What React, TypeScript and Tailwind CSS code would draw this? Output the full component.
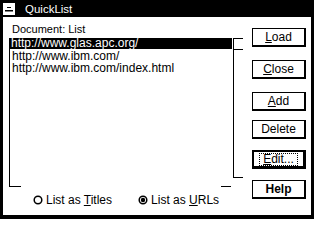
import React from 'react';

const urls = [
    "http://www.glas.apc.org/",
    "http://www.ibm.com/",
    "http://www.ibm.com/index.html",
];

function SysMenuIcon() {
    return (
        <svg width="12" height="12" viewBox="0 0 12 12" className="block">
            <rect x="0" y="0" width="12" height="12" fill="#fff" />
            <rect x="4" y="4" width="4" height="1" fill="#000" />
            <rect x="2" y="7" width="8" height="1.5" fill="#000" />
        </svg>
    );
}

function Radio({ checked }: { checked?: boolean }) {
    return (
        <svg width="10" height="10" viewBox="0 0 10 10" className="block shrink-0">
            <circle cx="5" cy="5" r="3.8" fill="#fff" stroke="#000" strokeWidth="1.5" />
            {checked && <circle cx="5" cy="5" r="2.2" fill="#000" />}
        </svg>
    );
}

function Button({ first, rest, isDefault, bold }: { first: string; rest: string; isDefault?: boolean; bold?: boolean }) {
    const underline = first !== "";
    return (
        <div
            className={
                isDefault
                    ? "h-[19px] w-[54px] bg-white border-black border-t-2 border-l-2 border-r-[3px] border-b-[3px] flex items-center justify-center"
                    : "h-[19px] w-[54px] bg-white border-black border-t border-l border-r-2 border-b-2 flex items-center justify-center"
            }
        >
            <span className={isDefault ? "leading-[11px] px-[3px] border border-dotted border-black" : "leading-[12px]"}>
                <span className={bold ? "font-bold" : ""}>
                    {underline && <span className="underline underline-offset-[1px]">{first}</span>}
                    {rest}
                </span>
            </span>
        </div>
    );
}

export default function App() {
    return (
        <div className="w-[314px] h-[219px] bg-black flex flex-col px-[3px] pb-[4px] font-['Liberation_Sans',Arial,sans-serif] text-[12px] text-black">
            <div className="h-[17px] shrink-0 flex items-center">
                <SysMenuIcon />
                <span className="ml-[10px] text-white text-[11.5px] leading-[14px]">QuickList</span>
            </div>

            <div className="flex-1 bg-white flex">
                {/* left column */}
                <div className="flex flex-col pl-[6px] w-[246px]">
                    <div className="mt-[5px] ml-[3px] text-[11px] leading-[14px]">Document: List</div>

                    <div className="mt-[2px] flex h-[149px]">
                        <div className="w-[224px] border-l border-black flex flex-col">
                            {urls.map((u, i) => (
                                <div
                                    key={u}
                                    className={
                                        i === 0
                                            ? "h-[10.5px] leading-[11px] pl-[2px] bg-black text-white -ml-[1px] mr-[1px] mb-[2px] whitespace-nowrap"
                                            : "h-[12.5px] leading-[11px] pl-[2px] whitespace-nowrap"
                                    }
                                >
                                    {u}
                                </div>
                            ))}
                            <div className="mt-auto flex h-[1px] -ml-[1px]">
                                <div className="w-[12px] bg-black" />
                                <div className="flex-1" />
                                <div className="w-[10px] bg-black mr-[2px]" />
                            </div>
                        </div>
                        <div className="w-[10px] h-[140px] border-l border-t border-b border-black">
                            <div className="h-[11px] border-b border-black" />
                        </div>
                    </div>

                    <div className="mt-[6px] flex items-center leading-[14px] ml-[24px]">
                        <Radio />
                        <span className="ml-[3px]">
                            List as <span className="underline underline-offset-[1px]">T</span>itles
                        </span>
                        <span className="ml-[26px]"><Radio checked /></span>
                        <span className="ml-[3px]">
                            List as <span className="underline underline-offset-[1px]">U</span>RLs
                        </span>
                    </div>
                </div>

                {/* buttons */}
                <div className="flex flex-col ml-[3px] pt-[11px]">
                    <Button first="L" rest="oad" />
                    <div className="mt-[13px]"><Button first="C" rest="lose" /></div>
                    <div className="mt-[13px]"><Button first="A" rest="dd" /></div>
                    <div className="mt-[9px]"><Button first="" rest="Delete" /></div>
                    <div className="mt-[11px]"><Button first="E" rest="dit..." isDefault /></div>
                    <div className="mt-[11px]"><Button first="" rest="Help" bold /></div>
                </div>
            </div>
        </div>
    );
}
